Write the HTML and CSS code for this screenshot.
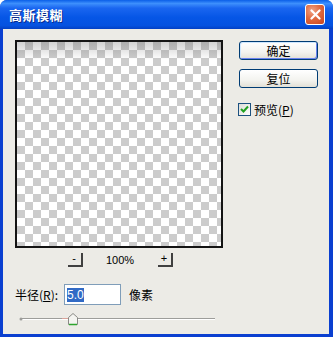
FILE: index.html
```html
<!DOCTYPE html>
<html lang="zh-CN">
<head>
    <meta charset="UTF-8">
    <title>高斯模糊</title>
    <link rel="stylesheet" href="styles.css">
</head>
<body>
    <div class="window">
        <div class="titlebar">
            <span class="title">高斯模糊</span>
            <button class="close-btn" aria-label="关闭">
                <svg width="11" height="11" viewBox="0 0 11 11">
                    <path d="M1.5 1.5 L9.5 9.5 M9.5 1.5 L1.5 9.5" stroke="#fff" stroke-width="2.2" stroke-linecap="round"/>
                </svg>
            </button>
        </div>

        <div class="dialog">
            <div class="main">
                <div class="left">
                    <div class="preview">
                        <div class="blur-edge"></div>
                    </div>
                    <div class="zoom-row">
                        <span class="tiny-btn">-</span>
                        <span class="zoom-value">100%</span>
                        <span class="tiny-btn">+</span>
                    </div>
                </div>

                <div class="right">
                    <button class="xp-btn default">确定</button>
                    <button class="xp-btn">复位</button>
                    <label class="check-row">
                        <span class="checkbox">
                            <svg width="9" height="9" viewBox="0 0 9 9">
                                <path d="M1 4 L3.5 6.5 L8 1.5" fill="none" stroke="#21a121" stroke-width="2"/>
                            </svg>
                        </span>
                        <span>预览(<u>P</u>)</span>
                    </label>
                </div>
            </div>

            <div class="radius-row">
                <span class="label">半径(<u>R</u>):</span>
                <span class="input"><span class="selected">5.0</span></span>
                <span class="unit">像素</span>
            </div>

            <div class="slider">
                <svg width="200" height="16" viewBox="0 0 200 16">
                    <line x1="3" y1="7.5" x2="197" y2="7.5" stroke="#9d9d9a" stroke-width="1"/>
                    <line x1="3" y1="8.5" x2="197" y2="8.5" stroke="#ffffff" stroke-width="1"/>
                    <line x1="44" y1="7.5" x2="50" y2="7.5" stroke="#d9a39a" stroke-width="1"/>
                    <circle cx="3" cy="8" r="1.5" fill="#9d9d9a"/>
                    <path d="M50.5 13.5 L50.5 6.5 L55 2.5 L59.5 6.5 L59.5 13.5 Z" fill="#f4f4f0" stroke="#8a8a86" stroke-width="1"/>
                    <line x1="51" y1="13.5" x2="59" y2="13.5" stroke="#2ea52e" stroke-width="1.4"/>
                </svg>
            </div>
        </div>
    </div>
</body>
</html>
```

FILE: styles.css
```css
body {
    margin: 0;
    background-color: #ffffff;
    font-family: "Noto Sans CJK SC", "Liberation Sans", sans-serif;
    font-size: 12px;
    color: #000;
}

.window {
    width: 333px;
    height: 337px;
    border-radius: 7px 7px 0 0;
    background-color: #0a3fd0;
    overflow: hidden;
    display: flex;
    flex-direction: column;
}

.titlebar {
    height: 29px;
    flex: none;
    display: flex;
    align-items: center;
    justify-content: space-between;
    padding: 0 8px 0 9px;
    background: linear-gradient(to bottom, #0a5fe8 0%, #3d8ffc 12%, #1a66f0 28%, #0656e6 60%, #0552e0 88%, #0340c4 100%);
}

.title {
    color: #fff;
    font-weight: bold;
    font-size: 13px;
    letter-spacing: 0.5px;
    text-shadow: 1px 1px 0 #0a2a8a;
}

.close-btn {
    width: 20px;
    height: 21px;
    padding: 0;
    border: 1px solid #fff;
    border-radius: 3px;
    background: radial-gradient(circle at 35% 30%, #f0a487 0%, #e06a40 45%, #c8431e 100%);
    display: flex;
    align-items: center;
    justify-content: center;
}

.dialog {
    flex: 1;
    margin: 0 4px 3px 3px;
    background-color: #ecebe6;
}

.main {
    display: flex;
    padding: 11px 0 0 12px;
}

.left {
    width: 208px;
}

.preview {
    width: 204px;
    height: 204px;
    border: 2px solid #141414;
    position: relative;
    background-color: #ffffff;
    background-image:
        linear-gradient(45deg, #cccccc 25%, transparent 25%, transparent 75%, #cccccc 75%),
        linear-gradient(45deg, #cccccc 25%, transparent 25%, transparent 75%, #cccccc 75%);
    background-size: 16px 16px;
    background-position: 0 0, 8px 8px;
}

.blur-edge {
    position: absolute;
    left: 0;
    right: 0;
    top: 0;
    height: 18px;
    background: linear-gradient(to bottom, rgba(90, 90, 90, 0.28), rgba(90, 90, 90, 0));
}

.zoom-row {
    display: flex;
    justify-content: center;
    align-items: center;
    margin-top: 4px;
    height: 15px;
    padding-left: 2px;
}

.tiny-btn {
    width: 13px;
    height: 12px;
    border-right: 2px solid #404040;
    border-bottom: 2px solid #404040;
    background-color: #ecebe6;
    font-family: "Liberation Sans", sans-serif;
    font-size: 11px;
    line-height: 11px;
    text-align: center;
}

.zoom-value {
    width: 75px;
    text-align: center;
    font-family: "Liberation Sans", sans-serif;
    font-size: 11px;
}

.right {
    margin-left: 16px;
    margin-top: 1px;
    display: flex;
    flex-direction: column;
}

.xp-btn {
    width: 79px;
    height: 19px;
    padding: 0;
    border: 1px solid #003c74;
    border-radius: 3px;
    background: linear-gradient(to bottom, #ffffff 0%, #f3f3ef 60%, #e2e0d6 100%);
    font-family: "Noto Sans CJK SC", sans-serif;
    font-size: 12px;
    line-height: 15px;
    color: #000;
    margin-bottom: 9px;
}

.xp-btn.default {
    box-shadow: inset 1px 1px 0 #cee7ff, inset -1px -1px 0 #6982ee;
}

.check-row {
    display: flex;
    align-items: center;
    gap: 3px;
    margin-top: 4px;
    margin-left: -1px;
}

.checkbox {
    width: 11px;
    height: 11px;
    border: 1px solid #1c5180;
    background: linear-gradient(135deg, #dcdcd6, #ffffff);
    display: flex;
    align-items: center;
    justify-content: center;
}

.radius-row {
    display: flex;
    align-items: center;
    margin-top: 17px;
    padding-left: 12px;
}

.label {
    width: 49px;
}

.input {
    width: 53px;
    height: 19px;
    border: 1px solid #7f9db9;
    background-color: #fff;
    display: flex;
    align-items: center;
    padding-left: 2px;
    font-family: "Liberation Sans", sans-serif;
    font-size: 12px;
}

.selected {
    background-color: #316ac5;
    color: #fff;
    line-height: 14px;
}

.unit {
    margin-left: 8px;
}

.slider {
    padding-left: 15px;
    margin-top: 6px;
}

.slider svg {
    display: block;
}
```
